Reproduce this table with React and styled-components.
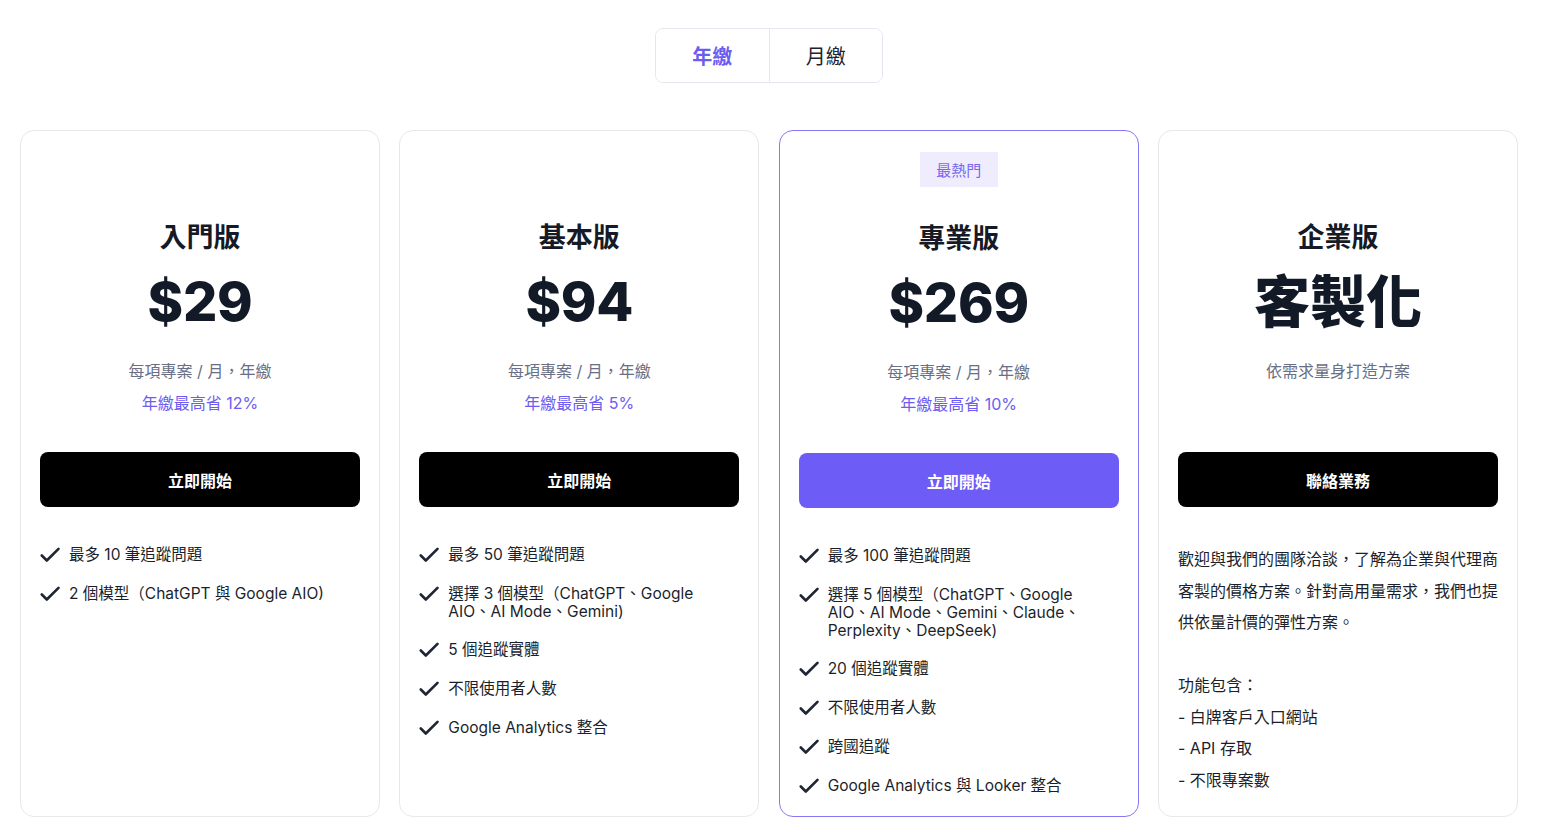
import React from "react";
import styled, { createGlobalStyle } from "styled-components";

const Global = createGlobalStyle`
  html, body { margin: 0; padding: 0; background: #ffffff; }
  body {
    font-family: Inter, "Noto Sans CJK TC", "Noto Sans", sans-serif;
    color: #111827;
    -webkit-font-smoothing: antialiased;
  }
  * { box-sizing: border-box; }
`;

const Page = styled.div`
  width: 1498px;
  margin-left: 20px;
  padding-top: 28px;
  display: flex;
  flex-direction: column;
  align-items: center;
`;

const Toggle = styled.div`
  display: flex;
  width: 228px;
  height: 55px;
  border: 1px solid #e6e7ee;
  border-radius: 8px;
  overflow: hidden;
`;

const ToggleItem = styled.button`
  flex: 1;
  border: none;
  background: #ffffff;
  font-family: inherit;
  font-size: 20px;
  font-weight: ${(p) => (p.$active ? 700 : 400)};
  color: ${(p) => (p.$active ? "#6c5cf0" : "#1f2330")};
  cursor: pointer;
  & + & { border-left: 1px solid #e6e7ee; }
`;

const Grid = styled.div`
  margin-top: 47px;
  width: 100%;
  display: grid;
  grid-template-columns: repeat(4, 360px);
  justify-content: space-between;
  align-items: stretch;
`;

const Card = styled.div`
  border: 1px solid ${(p) => (p.$popular ? "#8678f5" : "#e8e8ec")};
  border-radius: 14px;
  padding: ${(p) => (p.$popular ? 21 : 20)}px 19px 20px;
  height: 687px;
  display: flex;
  flex-direction: column;
  & > * { flex-shrink: 0; }
`;

const BadgeRow = styled.div`
  height: 35px;
  display: flex;
  justify-content: center;
`;

const Badge = styled.span`
  display: inline-flex;
  align-items: center;
  justify-content: center;
  width: 78px;
  height: 35px;
  background: #efecfe;
  color: #7868ef;
  font-size: 15px;
`;

const Title = styled.h2`
  margin: 34px 0 0;
  text-align: center;
  font-size: 27px;
  line-height: 36px;
  font-weight: 700;
  color: #151a26;
`;

const Price = styled.div`
  margin-top: 14px;
  text-align: center;
  font-size: ${(p) => (p.$cjk ? 56 : 54)}px;
  line-height: 64px;
  font-weight: 800;
  letter-spacing: ${(p) => (p.$cjk ? "0" : "-0.3px")};
  color: #131a27;
`;

const Sub = styled.div`
  margin-top: 26px;
  text-align: center;
  font-size: 16px;
  line-height: 22px;
  color: #6a6f85;
`;

const Save = styled.div`
  margin-top: 10px;
  text-align: center;
  font-size: 16px;
  line-height: 22px;
  color: #6c5cf0;
  min-height: 22px;
`;

const CTA = styled.button`
  margin-top: 38px;
  height: 55px;
  width: 100%;
  border: none;
  border-radius: 8px;
  background: ${(p) => (p.$popular ? "#6e5cf7" : "#000000")};
  color: #ffffff;
  font-family: inherit;
  font-size: 16px;
  font-weight: 700;
  cursor: pointer;
`;

const Features = styled.ul`
  list-style: none;
  margin: 39px 0 0;
  padding: 0;
  display: flex;
  flex-direction: column;
  gap: 20px;
`;

const Feature = styled.li`
  display: flex;
  align-items: flex-start;
  gap: 9px;
  font-size: 15.5px;
  line-height: 18px;
  color: #1b1f2b;
  svg { flex: none; margin-top: -1px; }
`;

const Body = styled.div`
  margin-top: 37px;
  font-size: 16px;
  line-height: 31.5px;
  color: #1b1f2b;
  white-space: pre-line;
`;

const Check = () => (
  <svg width="20" height="20" viewBox="0 0 20 20" fill="none" stroke="#1e2533" strokeWidth="2.6" strokeLinecap="round" strokeLinejoin="round">
    <polyline points="1.8 10.5 6.8 15.5 18.5 3.8" />
  </svg>
);

const plans = [
  {
    name: "入門版",
    price: "$29",
    sub: "每項專案 / 月，年繳",
    save: "年繳最高省 12%",
    cta: "立即開始",
    features: ["最多 10 筆追蹤問題", "2 個模型（ChatGPT 與 Google AIO)"],
  },
  {
    name: "基本版",
    price: "$94",
    sub: "每項專案 / 月，年繳",
    save: "年繳最高省 5%",
    cta: "立即開始",
    features: [
      "最多 50 筆追蹤問題",
      "選擇 3 個模型（ChatGPT、Google AIO、AI Mode、Gemini)",
      "5 個追蹤實體",
      "不限使用者人數",
      "Google Analytics 整合",
    ],
  },
  {
    name: "專業版",
    price: "$269",
    sub: "每項專案 / 月，年繳",
    save: "年繳最高省 10%",
    cta: "立即開始",
    popular: true,
    features: [
      "最多 100 筆追蹤問題",
      "選擇 5 個模型（ChatGPT、Google AIO、AI Mode、Gemini、Claude、Perplexity、DeepSeek)",
      "20 個追蹤實體",
      "不限使用者人數",
      "跨國追蹤",
      "Google Analytics 與 Looker 整合",
    ],
  },
  {
    name: "企業版",
    price: "客製化",
    cjk: true,
    sub: "依需求量身打造方案",
    save: "",
    cta: "聯絡業務",
    body:
      "歡迎與我們的團隊洽談，了解為企業與代理商客製的價格方案。針對高用量需求，我們也提供依量計價的彈性方案。\n\n功能包含：\n- 白牌客戶入口網站\n- API 存取\n- 不限專案數",
  },
];

export default function App() {
  return (
    <>
      <Global />
      <Page>
        <Toggle>
          <ToggleItem $active>年繳</ToggleItem>
          <ToggleItem>月繳</ToggleItem>
        </Toggle>
        <Grid>
          {plans.map((p) => (
            <Card key={p.name} $popular={p.popular}>
              <BadgeRow>{p.popular && <Badge>最熱門</Badge>}</BadgeRow>
              <Title>{p.name}</Title>
              <Price $cjk={p.cjk}>{p.price}</Price>
              <Sub>{p.sub}</Sub>
              <Save>{p.save}</Save>
              <CTA $popular={p.popular}>{p.cta}</CTA>
              {p.features && (
                <Features>
                  {p.features.map((f) => (
                    <Feature key={f}>
                      <Check />
                      <span>{f}</span>
                    </Feature>
                  ))}
                </Features>
              )}
              {p.body && <Body>{p.body}</Body>}
            </Card>
          ))}
        </Grid>
      </Page>
    </>
  );
}
